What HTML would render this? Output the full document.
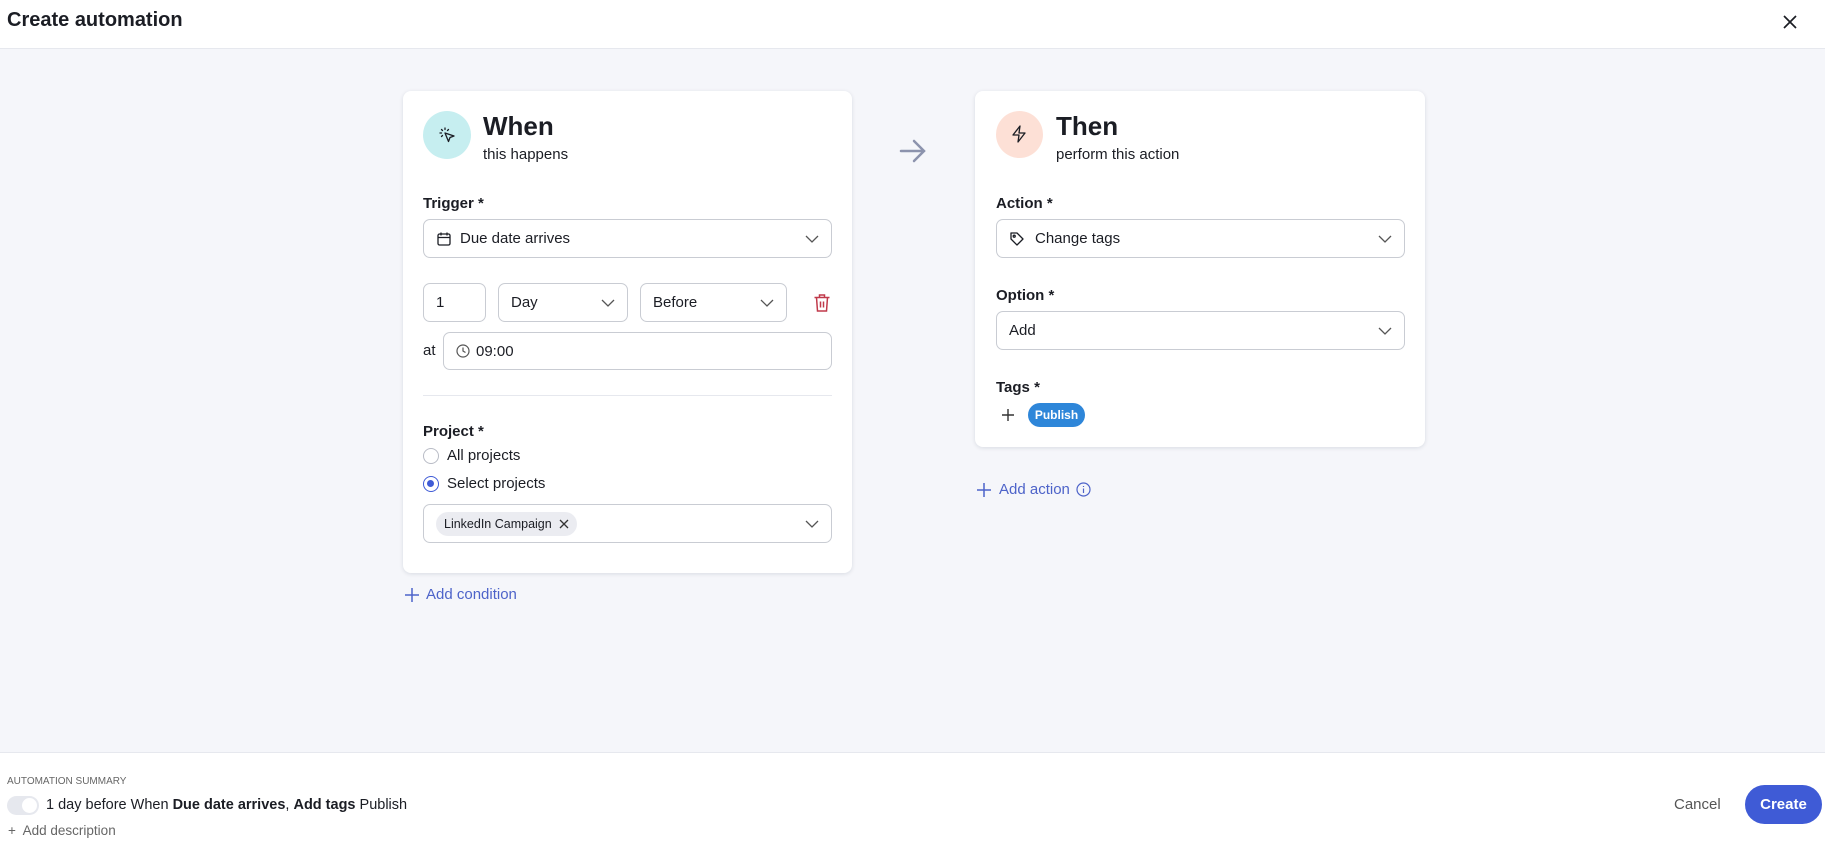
<!DOCTYPE html>
<html><head><meta charset="utf-8"><style>
*{box-sizing:border-box;margin:0;padding:0}
body{width:1825px;height:844px;background:#f5f6fa;font-family:"Liberation Sans",sans-serif;color:#1b1d24;position:relative;overflow:hidden}
.a{position:absolute}
.hdr{left:0;top:0;width:1825px;height:49px;background:#fff;border-bottom:1px solid #e6e8ee}
.card{background:#fff;border-radius:8px;box-shadow:0 1px 4px rgba(20,30,60,.12)}
.lbl{font-size:15px;font-weight:bold;color:#1b1d24}
.inp{background:#fff;border:1px solid #c9ccd3;border-radius:7px;height:39px;font-size:15px;display:flex;align-items:center;padding-left:12px}
.chev{position:absolute;right:12px;top:13px}
.t15{font-size:15px}
</style></head><body>
<div class="a hdr"></div>
<div class="a" style="left:7px;top:9px;font-size:20px;font-weight:bold">Create automation</div>
<svg class="a" style="left:1782px;top:14px" width="16" height="16" viewBox="0 0 16 16"><path d="M2 2L14 14M14 2L2 14" stroke="#1b1d24" stroke-width="1.7"/></svg>

<!-- card 1 -->
<div class="a card" style="left:403px;top:91px;width:449px;height:482px"></div>
<div class="a" style="left:423px;top:111px;width:48px;height:48px;border-radius:50%;background:#c6eef0"></div>
<svg class="a" style="left:437px;top:125px" width="20" height="20" viewBox="0 0 20 20" fill="none" stroke="#1b1d24" stroke-width="1.3" stroke-linecap="round"><path d="M8 8l9 3-4 1.5-1.5 4z" stroke-linejoin="round"/><path d="M8 3v1.5M4.5 4.5l1 1M3 8h1.5M4.5 11.5l1-1M11.5 4.5l-1 1"/></svg>
<div class="a" style="left:483px;top:111px;font-size:26px;font-weight:bold">When</div>
<div class="a t15" style="left:483px;top:146px">this happens</div>
<div class="a lbl" style="left:423px;top:195px">Trigger *</div>
<div class="a inp" style="left:423px;top:219px;width:409px">
<svg width="16" height="16" viewBox="0 0 16 16" fill="none" stroke="#1b1d24" stroke-width="1.3"><rect x="2" y="3" width="12" height="11" rx="1.5"/><path d="M2 6.5h12M5 1.5v3M11 1.5v3"/></svg><span style="margin-left:8px">Due date arrives</span>
<svg class="chev" width="14" height="12" viewBox="0 0 14 12"><path d="M1 3l6 6 6-6" fill="none" stroke="#555" stroke-width="1.3"/></svg></div>
<div class="a inp" style="left:423px;top:283px;width:63px">1</div>
<div class="a inp" style="left:498px;top:283px;width:130px">Day<svg class="chev" width="14" height="12" viewBox="0 0 14 12"><path d="M1 3l6 6 6-6" fill="none" stroke="#555" stroke-width="1.3"/></svg></div>
<div class="a inp" style="left:640px;top:283px;width:147px">Before<svg class="chev" width="14" height="12" viewBox="0 0 14 12"><path d="M1 3l6 6 6-6" fill="none" stroke="#555" stroke-width="1.3"/></svg></div>
<svg class="a" style="left:813px;top:293px" width="18" height="20" viewBox="0 0 18 20" fill="none" stroke="#c0394a" stroke-width="1.5"><path d="M1.5 4.5h15M6.5 4.5V2h5v2.5M3.5 4.5l1 13.5h9l1-13.5M7.5 8.5v6M10.5 8.5v6"/></svg>
<div class="a t15" style="left:423px;top:342px">at</div>
<div class="a inp" style="left:443px;top:332px;width:389px;height:38px">
<svg width="14" height="14" viewBox="0 0 14 14" fill="none" stroke="#555" stroke-width="1.2"><circle cx="7" cy="7" r="6"/><path d="M7 3.5V7l2.5 1.5"/></svg><span style="margin-left:6px">09:00</span></div>
<div class="a" style="left:423px;top:395px;width:409px;height:1px;background:#e6e8ee"></div>
<div class="a lbl" style="left:423px;top:423px">Project *</div>
<div class="a" style="left:423px;top:448px;width:16px;height:16px;border-radius:50%;border:1.5px solid #b9bcc6"></div>
<div class="a t15" style="left:447px;top:447px">All projects</div>
<div class="a" style="left:423px;top:476px;width:16px;height:16px;border-radius:50%;border:1.5px solid #3f5bd6"><div style="margin:3px;width:7px;height:7px;border-radius:50%;background:#3f5bd6"></div></div>
<div class="a t15" style="left:447px;top:475px">Select projects</div>
<div class="a inp" style="left:423px;top:504px;width:409px;padding-left:12px">
<div style="background:#ebecf1;border-radius:12px;height:24px;padding:0 8px;display:flex;align-items:center;font-size:12.5px">LinkedIn Campaign<svg style="margin-left:7px" width="10" height="10" viewBox="0 0 10 10"><path d="M1 1l8 8M9 1L1 9" stroke="#333" stroke-width="1.3"/></svg></div>
<svg class="chev" width="14" height="12" viewBox="0 0 14 12"><path d="M1 3l6 6 6-6" fill="none" stroke="#555" stroke-width="1.3"/></svg></div>
<svg class="a" style="left:405px;top:588px" width="14" height="14" viewBox="0 0 14 14"><path d="M7 0v14M0 7h14" stroke="#4d63c9" stroke-width="1.5"/></svg>
<div class="a t15" style="left:426px;top:586px;color:#4d63c9">Add condition</div>

<!-- arrow -->
<svg class="a" style="left:899px;top:138px" width="28" height="26" viewBox="0 0 28 26" fill="none" stroke="#8c93ad" stroke-width="2.5" stroke-linecap="round"><path d="M2 13h23M15 3l10 10-10 10"/></svg>

<!-- card 2 -->
<div class="a card" style="left:975px;top:91px;width:450px;height:356px"></div>
<div class="a" style="left:996px;top:111px;width:47px;height:47px;border-radius:50%;background:#fde0d6"></div>
<svg class="a" style="left:1009px;top:124px" width="20" height="20" viewBox="0 0 20 20" fill="none" stroke="#1b1d24" stroke-width="1.3" stroke-linejoin="round"><path d="M11 2L4 11h6l-1 7 7-9h-6z"/></svg>
<div class="a" style="left:1056px;top:111px;font-size:26px;font-weight:bold">Then</div>
<div class="a t15" style="left:1056px;top:146px">perform this action</div>
<div class="a lbl" style="left:996px;top:195px">Action *</div>
<div class="a inp" style="left:996px;top:219px;width:409px">
<svg width="16" height="16" viewBox="0 0 16 16" fill="none" stroke="#1b1d24" stroke-width="1.3"><path d="M2 2h6l6 6-6 6-6-6z" stroke-linejoin="round"/><circle cx="5.2" cy="5.2" r="1"/></svg><span style="margin-left:10px">Change tags</span>
<svg class="chev" width="14" height="12" viewBox="0 0 14 12"><path d="M1 3l6 6 6-6" fill="none" stroke="#555" stroke-width="1.3"/></svg></div>
<div class="a lbl" style="left:996px;top:287px">Option *</div>
<div class="a inp" style="left:996px;top:311px;width:409px">Add<svg class="chev" width="14" height="12" viewBox="0 0 14 12"><path d="M1 3l6 6 6-6" fill="none" stroke="#555" stroke-width="1.3"/></svg></div>
<div class="a lbl" style="left:996px;top:379px">Tags *</div>
<svg class="a" style="left:1002px;top:409px" width="12" height="12" viewBox="0 0 12 12"><path d="M6 0v12M0 6h12" stroke="#333" stroke-width="1.4"/></svg>
<div class="a" style="left:1028px;top:403px;width:57px;height:24px;border-radius:12px;background:#2e86d9;color:#fff;font-size:12px;font-weight:bold;text-align:center;line-height:24px">Publish</div>
<svg class="a" style="left:977px;top:483px" width="14" height="14" viewBox="0 0 14 14"><path d="M7 0v14M0 7h14" stroke="#4d63c9" stroke-width="1.5"/></svg>
<div class="a t15" style="left:999px;top:481px;color:#4d63c9">Add action</div>
<svg class="a" style="left:1076px;top:482px" width="15" height="15" viewBox="0 0 15 15" fill="none" stroke="#4d63c9" stroke-width="1.2"><circle cx="7.5" cy="7.5" r="6.5"/><path d="M7.5 6.5v4.5M7.5 4v1"/></svg>

<!-- footer -->
<div class="a" style="left:0;top:752px;width:1825px;height:92px;background:#fff;border-top:1px solid #e6e8ee"></div>
<div class="a" style="left:7px;top:776px;font-size:10px;color:#666">AUTOMATION SUMMARY</div>
<div class="a" style="left:7px;top:796px;width:32px;height:19px;border-radius:10px;background:#e6e8ee"><div style="position:absolute;right:2px;top:2px;width:15px;height:15px;border-radius:50%;background:#fff"></div></div>
<div class="a" style="left:46px;top:797px;font-size:14.5px">1 day before When <b>Due date arrives</b>, <b>Add tags</b> Publish</div>
<div class="a" style="left:8px;top:823px;font-size:13.5px;color:#666">+&nbsp; Add description</div>
<div class="a t15" style="left:1674px;top:796px;color:#555">Cancel</div>
<div class="a" style="left:1745px;top:785px;width:77px;height:39px;border-radius:20px;background:#3f5bd6;color:#fff;font-size:15px;font-weight:bold;text-align:center;line-height:39px">Create</div>
</body></html>
